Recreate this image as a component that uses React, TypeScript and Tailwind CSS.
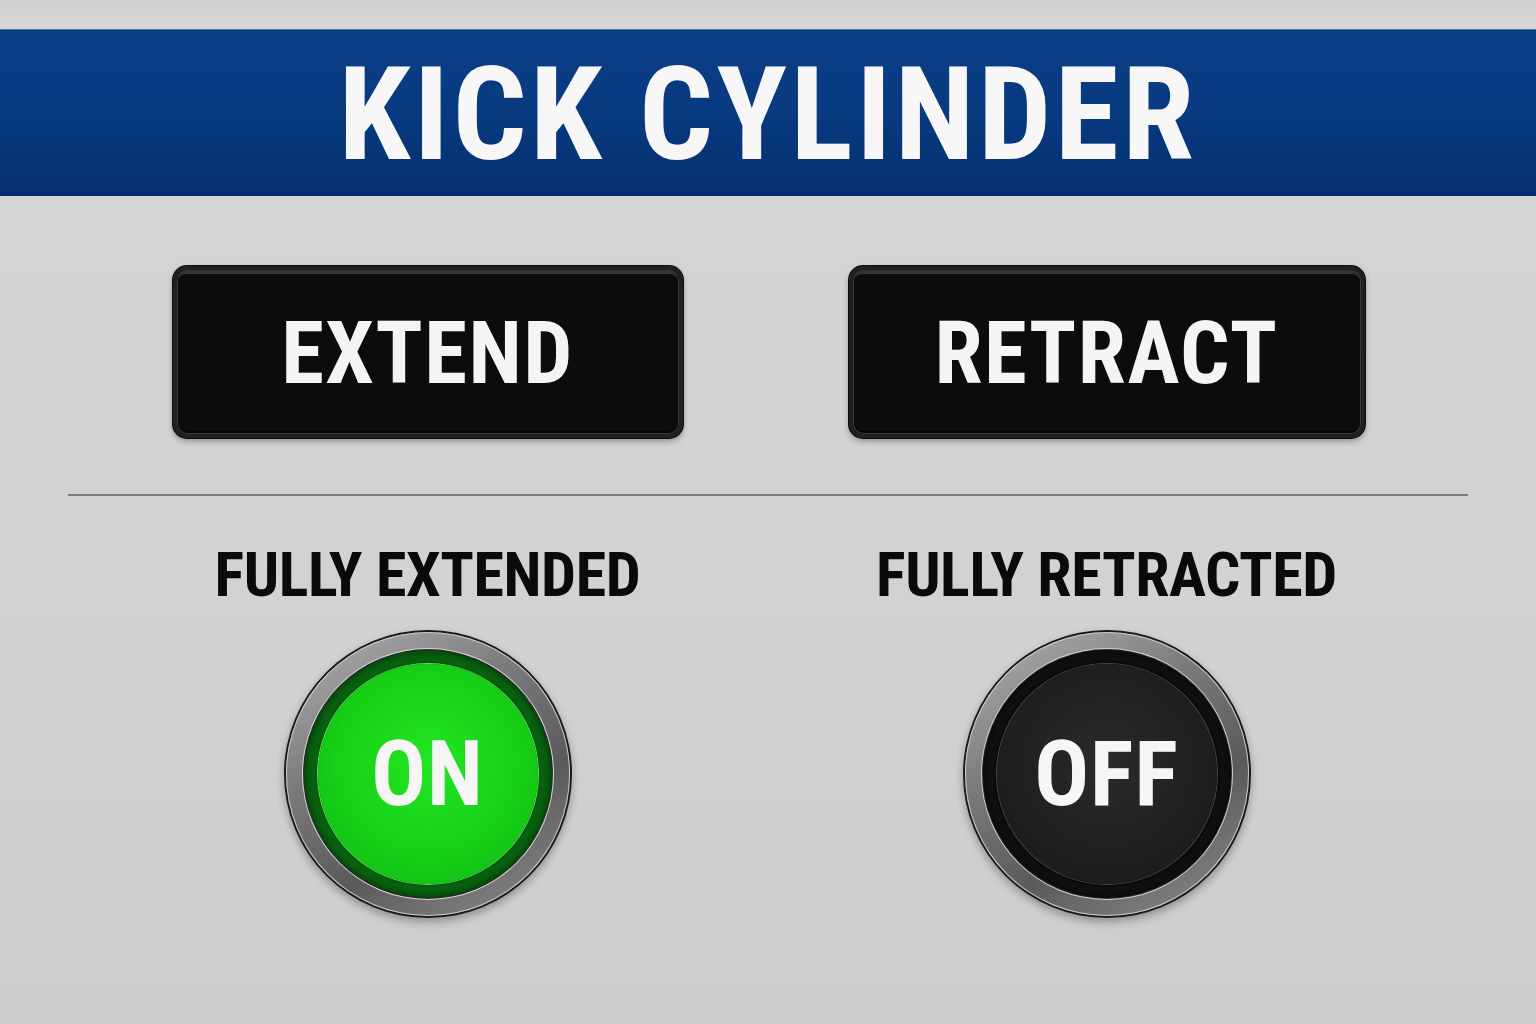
import React from "react";

const condensed = "font-['Roboto',sans-serif] font-bold font-stretch-[75%]";

function PanelButton({ label, width }: { label: string; width: string }) {
  return (
    <div
      className={`${width} h-[172px] rounded-[14px] bg-[#202020] p-[4px] shadow-[0_3px_6px_rgba(0,0,0,0.35),0_0_0_1px_#111]`}
    >
      <div className="h-full w-full rounded-[10px] border-t-[3px] border-[#333] bg-[#0c0c0c] shadow-[inset_0_0_0_1px_#3a3a3a,inset_0_-3px_0_#050505] flex items-center justify-center">
        <span className={`${condensed} text-[87px] leading-none text-[#f4f4f4] tracking-[1.5px]`}>
          {label}
        </span>
      </div>
    </div>
  );
}

function Lamp({ on }: { on: boolean }) {
  return (
    <div className="h-[288px] w-[288px] rounded-full bg-[#1a1a1a] p-[2px] shadow-[0_4px_8px_rgba(0,0,0,0.3)]">
      <div className="h-full w-full rounded-full bg-[linear-gradient(150deg,#b4b4b4_0%,#7c7c7c_35%,#5a5a5a_65%,#909090_100%)] shadow-[inset_0_0_0_1px_#c8c8c8] p-[18px]">
        <div
          className={`h-full w-full rounded-full p-[14px] ${
            on
              ? "bg-[#08620f] shadow-[0_0_0_1px_#2a2a2a,0_0_0_2px_#d8d8d8,inset_0_0_8px_rgba(0,0,0,0.6)]"
              : "bg-[#101010] shadow-[0_0_0_1px_#2a2a2a,0_0_0_2px_#d0d0d0,inset_0_0_8px_rgba(0,0,0,0.6)]"
          }`}
        >
          <div
            className={`h-full w-full rounded-full flex items-center justify-center ${
              on
                ? "bg-[radial-gradient(circle_at_50%_45%,#24e424_0%,#16d016_55%,#10b414_100%)] shadow-[0_0_0_1px_#5ee05e,0_0_0_3px_#075a0e]"
                : "bg-[radial-gradient(circle_at_50%_45%,#2a2a2a_0%,#1f1f1f_60%,#181818_100%)] shadow-[0_0_0_1px_#4a4a4a,0_0_0_3px_#0a0a0a]"
            }`}
          >
            <span className={`${condensed} text-[91px] leading-none text-[#f6f6f6] tracking-[1px]`}>
              {on ? "ON" : "OFF"}
            </span>
          </div>
        </div>
      </div>
    </div>
  );
}

export default function App() {
  return (
    <div className="h-[1024px] w-[1536px] overflow-hidden bg-[linear-gradient(180deg,#d6d6d6_0%,#d2d2d2_60%,#cdcdcd_100%)] flex flex-col">
      <div className="h-[29px] bg-[linear-gradient(180deg,#cfcfcf,#d8d8d8)]" />
      <header className="h-[167px] bg-[linear-gradient(180deg,#0b3e87_0%,#083a80_50%,#042f6e_100%)] border-t border-[#5873a6] border-b border-b-[#0a2a5a] flex items-center justify-center">
        <h1 className={`${condensed} mt-[4px] text-[130px] leading-none text-[#f7f7f7] tracking-[3.5px]`}>
          KICK CYLINDER
        </h1>
      </header>

      <div className="mt-[70px] grid grid-cols-2 pl-[88px] pr-[90px]">
        <div className="flex justify-center">
          <PanelButton label="EXTEND" width="w-[510px]" />
        </div>
        <div className="flex justify-center">
          <PanelButton label="RETRACT" width="w-[516px]" />
        </div>
      </div>

      <div className="mx-[68px] mt-[56px] h-[2px] bg-[#7c7c7c]" />

      <div className="mt-[48px] grid grid-cols-2 pl-[88px] pr-[90px]">
        <div className="flex flex-col items-center">
          <div className={`${condensed} text-[62px] leading-none text-[#0a0a0a] tracking-[-0.4px]`}>FULLY EXTENDED</div>
          <div className="mt-[24px]">
            <Lamp on />
          </div>
        </div>
        <div className="flex flex-col items-center">
          <div className={`${condensed} text-[62px] leading-none text-[#0a0a0a] tracking-[-0.4px]`}>FULLY RETRACTED</div>
          <div className="mt-[24px]">
            <Lamp on={false} />
          </div>
        </div>
      </div>
    </div>
  );
}
